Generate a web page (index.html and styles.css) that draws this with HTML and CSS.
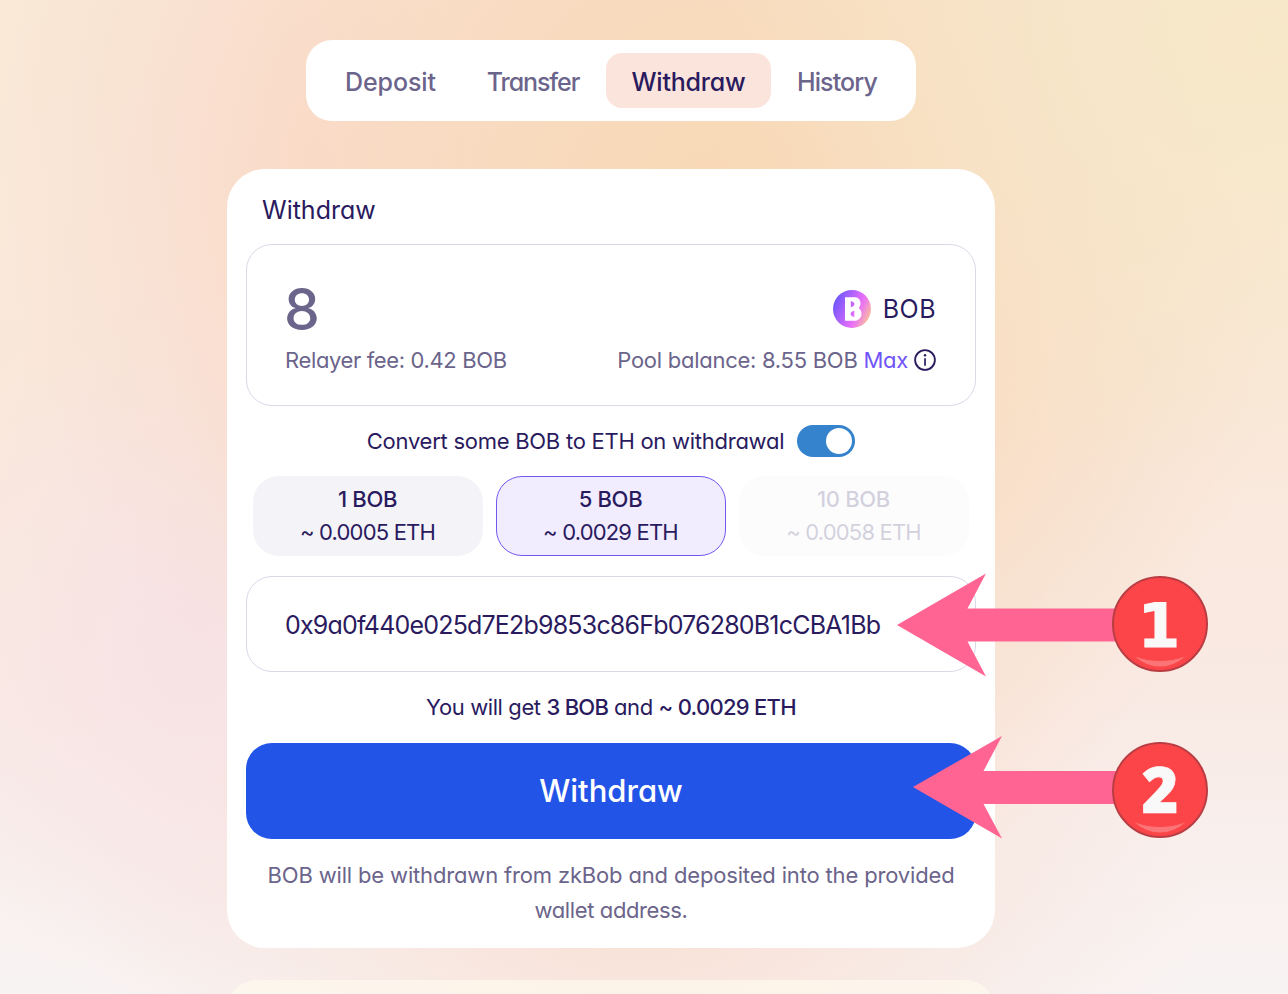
FILE: index.html
```html
<!DOCTYPE html>
<html lang="en">
<head>
<meta charset="utf-8">
<title>Withdraw</title>
<link rel="stylesheet" href="styles.css">
</head>
<body>
<main class="page">
  <nav class="tabs">
    <a class="tab">Deposit</a>
    <a class="tab tab-transfer">Transfer</a>
    <a class="tab tab-active">Withdraw</a>
    <a class="tab tab-history">History</a>
  </nav>

  <section class="card">
    <h1 class="title">Withdraw</h1>

    <div class="amount-box">
      <div class="row">
        <span class="amount">8</span>
        <span class="token">
          <svg class="token-icon" viewBox="0 0 38 38">
            <defs>
              <linearGradient id="bob" x1="0" y1="0.3" x2="1" y2="0.75">
                <stop offset="0.05" stop-color="#7458fb"/>
                <stop offset="0.6" stop-color="#e46cfb"/>
                <stop offset="0.72" stop-color="#ec80e6"/>
                <stop offset="1" stop-color="#fcc890"/>
              </linearGradient>
            </defs>
            <circle cx="19" cy="19" r="19" fill="url(#bob)"/>
            <path fill="#fff" fill-rule="evenodd" d="M12 7.300h9.500c4 0 6 2.700 6 6 0 2-.7 3.600-1.900 4.700 1.800 1.200 2.900 3.200 2.900 5.500 0 4.200-3 7.300-7 7.300H12zM17.800 11v6.300c2.200-.5 3.700-1.700 3.700-3.200s-1.500-2.700-3.700-3.100zM21.300 20.800c-2.200.5-3.700 1.700-3.700 3.100s1.500 2.600 3.700 3.100z"/>
          </svg>
          <span class="token-name">BOB</span>
        </span>
      </div>
      <div class="row meta">
        <span class="fee">Relayer fee: 0.42 BOB</span>
        <span class="balance">
          <span class="pool">Pool balance: 8.55 BOB</span>
          <a class="max">Max</a>
          <svg class="info" viewBox="0 0 22 22" fill="none" stroke="#2a1a5e">
            <circle cx="11" cy="11" r="9.900" stroke-width="1.800"/>
            <path d="M11 9.200v7.600" stroke-width="1.700"/>
            <circle cx="11" cy="6.300" r="1.200" fill="#2a1a5e" stroke="none"/>
          </svg>
        </span>
      </div>
    </div>

    <div class="convert">
      <span class="convert-label">Convert some BOB to ETH on withdrawal</span>
      <span class="switch"><span class="knob"></span></span>
    </div>

    <div class="options">
      <div class="option"><span class="option-bob">1 BOB</span><span class="option-eth">~ 0.0005 ETH</span></div>
      <div class="option option-selected"><span class="option-bob">5 BOB</span><span class="option-eth">~ 0.0029 ETH</span></div>
      <div class="option option-disabled"><span class="option-bob">10 BOB</span><span class="option-eth">~ 0.0058 ETH</span></div>
    </div>

    <div class="address">0x9a0f440e025d7E2b9853c86Fb076280B1cCBA1Bb</div>
    <p class="summary">You will get <b>3 BOB</b> and <b>~ 0.0029 ETH</b></p>
    <button class="submit">Withdraw</button>
    <p class="note">BOB will be withdrawn from zkBob and deposited into the provided<br><span class="note-end">wallet address.</span></p>
  </section>

  <section class="next-card"></section>
</main>

<svg class="callout callout-first" viewBox="0 0 312 104">
  <path fill="#ff6492" d="M0 52 89 .5 70.500 35.500H225V68.500H70.500L89 103.500z"/>
  <circle cx="263" cy="51" r="47" fill="#fb4549" stroke="#b93d43" stroke-width="2"/>
  <path fill="#fb7477" d="M238 83.500q25 9 50 0-11 10-25 10t-25-10z"/>
  <text class="num num-one" x="262" y="73.500">1</text>
</svg>
<svg class="callout callout-second" viewBox="0 0 296 104">
  <path fill="#ff6492" d="M0 51 89 0 70.500 35H225V68H70.500L89 102.500z"/>
  <circle cx="247" cy="54" r="47" fill="#fb4549" stroke="#b93d43" stroke-width="2"/>
  <path fill="#fb7477" d="M222 86.500q25 9 50 0-11 10-25 10t-25-10z"/>
  <text class="num num-two" x="247" y="77">2</text>
</svg>
</body>
</html>
```
FILE: styles.css
```css
* { box-sizing: border-box; }

body {
  margin: 0;
  height: 994px;
  overflow: hidden;
  position: relative;
  font-family: Inter, "Liberation Sans", sans-serif;
  font-feature-settings: "cv11", "ss03";
  font-size: 22px;
  color: #2a1a5e;
  background:
    radial-gradient(ellipse 560px 460px at 1260px 40px, rgba(247, 232, 200, 1), rgba(247, 232, 200, 0)),
    radial-gradient(ellipse 560px 700px at 720px 240px, rgba(248, 216, 182, 1) 10%, rgba(248, 217, 188, 0.75) 50%, rgba(248, 218, 190, 0)),
    radial-gradient(ellipse 330px 520px at 320px 160px, rgba(250, 219, 206, 1), rgba(250, 219, 206, 0)),
    radial-gradient(ellipse 280px 380px at 190px 640px, rgba(247, 226, 228, 1), rgba(248, 228, 232, 0)),
    radial-gradient(ellipse 560px 330px at 640px 900px, rgba(248, 226, 216, 1) 10%, rgba(248, 226, 220, 0)),
    linear-gradient(#f9e9d6 0%, #f9e8da 40%, #f9eae4 70%, #f8f4f4 100%);
}

.page {
  display: flex;
  flex-direction: column;
  align-items: center;
  width: 768px;
  margin-left: 227px;
  padding-top: 40px;
}

.tabs {
  display: grid;
  grid-template-columns: 143px 144px 165px 132px;
  width: 610px;
  height: 81px;
  padding: 13px;
  border-radius: 26px;
  background: #fff;
}
.tab {
  display: flex;
  align-items: center;
  justify-content: center;
  padding-top: 2px;
  border-radius: 16px;
  font-size: 25px;
  font-weight: 500;
  letter-spacing: -0.1px;
  color: #6b648b;
}
.tab-transfer { letter-spacing: -1.1px; padding-right: 2px; }
.tab-history { letter-spacing: -0.85px; }
.tab-active { background: #fbe4dc; color: #2a1a5e; letter-spacing: -0.2px; }

.card {
  width: 768px;
  height: 779px;
  margin-top: 48px;
  padding: 0 19px;
  border-radius: 38px;
  background: #fff;
}
.title {
  margin: 0;
  height: 75px;
  padding: 4px 0 0 16px;
  font-size: 25px;
  font-weight: 400;
  line-height: 75px;
  letter-spacing: 0;
}

.amount-box {
  height: 162px;
  padding: 27px 39px 0 39px;
  border: 1px solid #dbd8e8;
  border-radius: 26px;
}
.row { display: flex; justify-content: space-between; align-items: center; height: 74px; }
.amount { font-size: 57px; font-weight: 500; color: #6b648b; margin-left: -2px; }
.token { display: flex; align-items: center; gap: 12px; }
.token-icon { width: 38px; height: 38px; }
.token-name { font-size: 25px; letter-spacing: 0.5px; }
.meta { height: 28px; color: #6b648b; }
.fee { letter-spacing: -0.37px; margin-left: -1px; }
.balance { display: flex; align-items: center; gap: 6px; }
.pool { letter-spacing: -0.27px; }
.max { color: #7054f8; letter-spacing: -0.3px; }
.info { width: 22px; height: 22px; }

.convert { display: flex; align-items: center; justify-content: center; gap: 13px; height: 70px; }
.convert-label { letter-spacing: -0.26px; }
.switch {
  display: flex;
  justify-content: flex-end;
  align-items: center;
  width: 58px;
  height: 32px;
  padding: 3px;
  border-radius: 16px;
  background: #3583cd;
}
.knob { width: 26px; height: 26px; border-radius: 50%; background: #fff; }

.options { display: grid; grid-template-columns: repeat(3, 230px); gap: 13px; margin-left: 7px; }
.option {
  display: flex;
  flex-direction: column;
  align-items: center;
  justify-content: center;
  height: 80px;
  padding-right: 1px;
  border: 1px solid transparent;
  border-radius: 26px;
  background: #f4f3f8 border-box;
  line-height: 33px;
}
.option-selected { border-color: #7457ef; background: #f1edff; }
.option-disabled { opacity: 0.2; }
.option-bob { font-weight: 500; letter-spacing: -0.35px; }
.option-eth { letter-spacing: -0.82px; }

.address {
  height: 96px;
  margin-top: 20px;
  padding-left: 38px;
  border: 1px solid #dbd8e8;
  border-radius: 26px;
  font-size: 25px;
  line-height: 96px;
  letter-spacing: -0.81px;
}
.summary { margin: 0; height: 71px; line-height: 71px; text-align: center; letter-spacing: -0.4px; }
.summary b { font-weight: 500; letter-spacing: -0.72px; }
.submit {
  display: block;
  width: 730px;
  height: 96px;
  padding: 0 0 1px;
  border: 0;
  border-radius: 26px;
  background: #2254e8;
  color: #fff;
  font: 500 31px Inter, sans-serif;
  font-feature-settings: "cv11", "ss03";
}
.note { margin: 19px 0 0; line-height: 35px; text-align: center; letter-spacing: -0.16px; color: #6b648b; }
.note-end { letter-spacing: -0.38px; }

.next-card {
  width: 768px;
  height: 60px;
  margin-top: 32px;
  border-radius: 38px;
  background: rgba(255, 250, 238, 0.7);
}

.callout { position: absolute; height: 104px; }
.callout-first { left: 897px; top: 573px; width: 312px; }
.callout-second { left: 913px; top: 736px; width: 296px; }
.num { fill: #f9f9f9; text-anchor: middle; }
.num-one { font: bold 61px "DejaVu Sans", sans-serif; stroke: #f9f9f9; stroke-width: 1px; }
.num-two { font: 800 63px "Open Sans", sans-serif; stroke: #f9f9f9; stroke-width: 0.6px; }
```
